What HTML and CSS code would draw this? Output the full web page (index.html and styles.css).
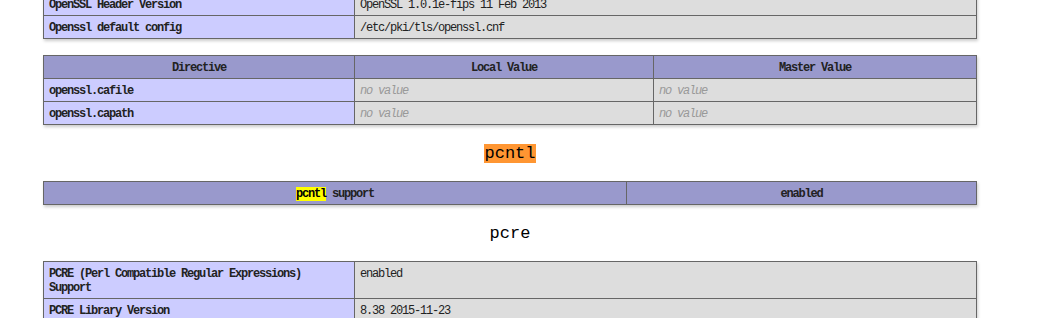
FILE: index.html
```html
<!DOCTYPE html>
<html>
<head>
<meta charset="utf-8">
<link rel="stylesheet" href="styles.css">
</head>
<body>
<div class="center">
  <table>
    <tr><td class="e">OpenSSL Header Version</td><td class="v">OpenSSL 1.0.1e-fips 11 Feb 2013</td></tr>
    <tr><td class="e">Openssl default config</td><td class="v">/etc/pki/tls/openssl.cnf</td></tr>
  </table>
  <table>
    <tr class="h"><th class="c300">Directive</th><th class="c288">Local Value</th><th>Master Value</th></tr>
    <tr><td class="e">openssl.cafile</td><td class="v"><i>no value</i></td><td class="v"><i>no value</i></td></tr>
    <tr><td class="e">openssl.capath</td><td class="v"><i>no value</i></td><td class="v"><i>no value</i></td></tr>
  </table>
  <h2><mark class="active">pcntl</mark></h2>
  <table>
    <tr class="h"><th class="c572"><mark class="find">pcntl</mark> support</th><th>enabled</th></tr>
  </table>
  <h2>pcre</h2>
  <table>
    <tr><td class="e">PCRE (Perl Compatible Regular Expressions) Support</td><td class="v">enabled</td></tr>
    <tr><td class="e">PCRE Library Version</td><td class="v">8.38 2015-11-23</td></tr>
  </table>
</div>
</body>
</html>
```

FILE: styles.css
```css
html, body {
  margin: 0;
  padding: 0;
  background: #fff;
  color: #222;
  overflow: hidden;
}
.center {
  width: 934px;
  margin-left: 43px;
  margin-top: -8px;
  font-family: "Liberation Mono", monospace;
}
table {
  border-collapse: collapse;
  border: 0;
  width: 934px;
  margin: 16px 0;
  box-shadow: 1px 2px 3px #ccc;
}
.center > table:first-child {
  margin-top: 0;
}
td, th {
  border: 1px solid #666;
  font-size: 12px;
  letter-spacing: -1.2px;
  line-height: 14px;
  vertical-align: baseline;
  padding: 5px 5px 3px;
  color: #222;
}
th {
  text-align: center;
}
td {
  text-align: left;
}
.h {
  background-color: #99c;
  font-weight: bold;
}
.e {
  background-color: #ccf;
  width: 300px;
  font-weight: bold;
}
.v {
  background-color: #ddd;
}
.v i {
  color: #999;
}
.c300 { width: 300px; }
.c288 { width: 288px; }
.c572 { width: 572px; }
h2 {
  font-family: "Liberation Mono", monospace;
  font-size: 17px;
  font-weight: normal;
  line-height: 22px;
  padding-top: 2px;
  text-align: center;
  margin: 16px 0;
  color: #000;
}
mark.active {
  background: #ff9632;
  color: #000;
}
mark.find {
  background: #ff0;
  color: #000;
}
```
